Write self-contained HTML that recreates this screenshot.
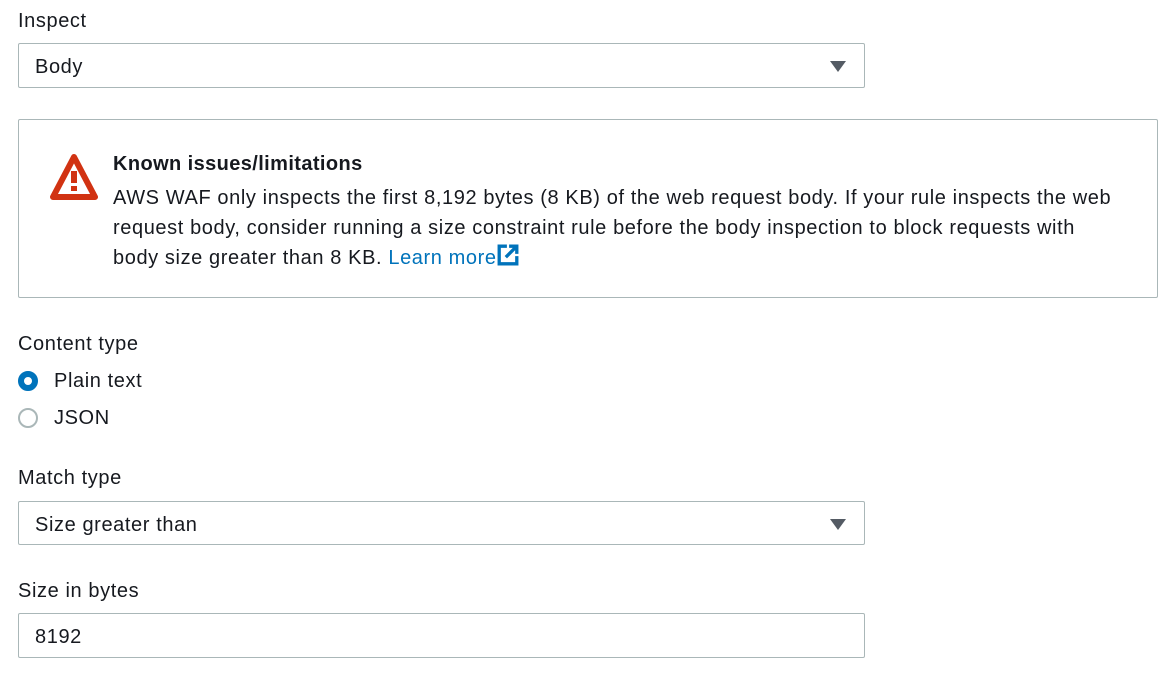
<!DOCTYPE html>
<html><head><style>
body{margin:0;width:1176px;height:680px;background:#fff;font-family:"Liberation Sans",sans-serif;color:#16191f;font-size:20px;letter-spacing:0.6px;position:relative;overflow:hidden}
.a{position:absolute;white-space:nowrap}
.box{position:absolute;left:18px;width:847px;border:1px solid #aab7b8;border-radius:2px;box-sizing:border-box}
.tri{position:absolute;right:18px;top:17px;width:0;height:0;border-left:8px solid transparent;border-right:8px solid transparent;border-top:11px solid #545b64}
.r{position:absolute;left:18px;width:20px;height:20px;border-radius:50%;box-sizing:border-box}
</style></head><body>
<div class="a" style="left:18px;top:10px">Inspect</div>
<div class="box" style="top:43px;height:45px"><div class="a" style="left:16px;top:12px">Body</div><div class="tri"></div></div>
<div class="box" style="top:119px;height:179px;width:1140px"></div>
<svg class="a" style="left:49px;top:153px" width="50" height="48" viewBox="0 0 50 48"><path d="M25 4 L46 44 L4 44 Z" fill="none" stroke="#d13212" stroke-width="6" stroke-linejoin="round"/><rect x="22" y="18" width="6" height="12" fill="#d13212"/><rect x="22" y="33" width="6" height="5" fill="#d13212"/></svg>
<div class="a" style="left:113px;top:153px;font-weight:bold;font-size:20px;letter-spacing:0.4px">Known issues/limitations</div>
<div class="a" style="left:113px;top:183px;line-height:30px;font-size:20px;letter-spacing:0.6px">AWS WAF only inspects the first 8,192 bytes (8 KB) of the web request body. If your rule inspects the web<br>request body, consider running a size constraint rule before the body inspection to block requests with<br>body size greater than 8 KB. <span style="color:#0073bb">Learn more</span><svg width="22" height="22" viewBox="0 0 20 20" style="vertical-align:-2px"><path d="M9 2H2V18H18V11" fill="none" stroke="#0073bb" stroke-width="3"/><path d="M11 2H18V9M18 2L8 12" fill="none" stroke="#0073bb" stroke-width="3"/></svg></div>
<div class="a" style="left:18px;top:333px">Content type</div>
<div class="r" style="top:371px;border:6px solid #0073bb"></div>
<div class="a" style="left:54px;top:370px">Plain text</div>
<div class="r" style="top:408px;border:2px solid #aab7b8"></div>
<div class="a" style="left:54px;top:407px">JSON</div>
<div class="a" style="left:18px;top:467px">Match type</div>
<div class="box" style="top:501px;height:44px"><div class="a" style="left:16px;top:12px">Size greater than</div><div class="tri"></div></div>
<div class="a" style="left:18px;top:580px">Size in bytes</div>
<div class="box" style="top:613px;height:45px"><div class="a" style="left:16px;top:12px">8192</div></div>
</body></html>
